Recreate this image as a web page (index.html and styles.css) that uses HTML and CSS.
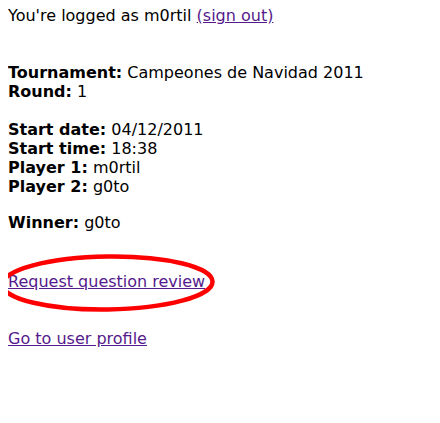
FILE: index.html
```html
<!DOCTYPE html>
<html>
<head>
<meta charset="utf-8">
<link rel="stylesheet" href="styles.css">
</head>
<body>
<p class="login">You're logged as m0rtil <a href="#" class="link">(sign out)</a></p>
<p class="block first"><b>Tournament:</b> Campeones de Navidad 2011<br><b>Round:</b> 1</p>
<p class="block"><b>Start date:</b> 04/12/2011<br><b>Start time:</b> 18:38<br><b>Player 1:</b> m0rtil<br><b>Player 2:</b> g0to</p>
<p class="winner"><b>Winner:</b> g0to</p>
<p class="review"><span class="mark"><a href="#" class="link">Request question review</a><svg class="ellipse" width="220" height="62" viewBox="0 0 220 62"><ellipse cx="107.5" cy="31" rx="105" ry="26.5" fill="none" stroke="#ff0000" stroke-width="4.5" transform="rotate(-0.8 107.5 31)"/></svg></span></p>
<p class="profile"><a href="#" class="link">Go to user profile</a></p>
</body>
</html>
```
FILE: styles.css
```css
body {
  margin: 6px 8px 8px 8px;
  font-family: "DejaVu Sans", sans-serif;
  font-size: 16px;
  line-height: 19px;
  color: #000;
  background: #fff;
}
p {
  margin: 0;
}
.first {
  margin-top: 38px;
}
.block {
  margin-bottom: 19px;
}
.block + .block {
  margin-top: 0;
}
.winner {
  margin-top: -2px;
}
.link {
  color: #551a8b;
  text-decoration: underline;
}
.review {
  margin-top: 40px;
}
.mark {
  position: relative;
  display: inline-block;
}
.ellipse {
  position: absolute;
  left: -8px;
  top: -20px;
  pointer-events: none;
}
.profile {
  margin-top: 38px;
}
```
